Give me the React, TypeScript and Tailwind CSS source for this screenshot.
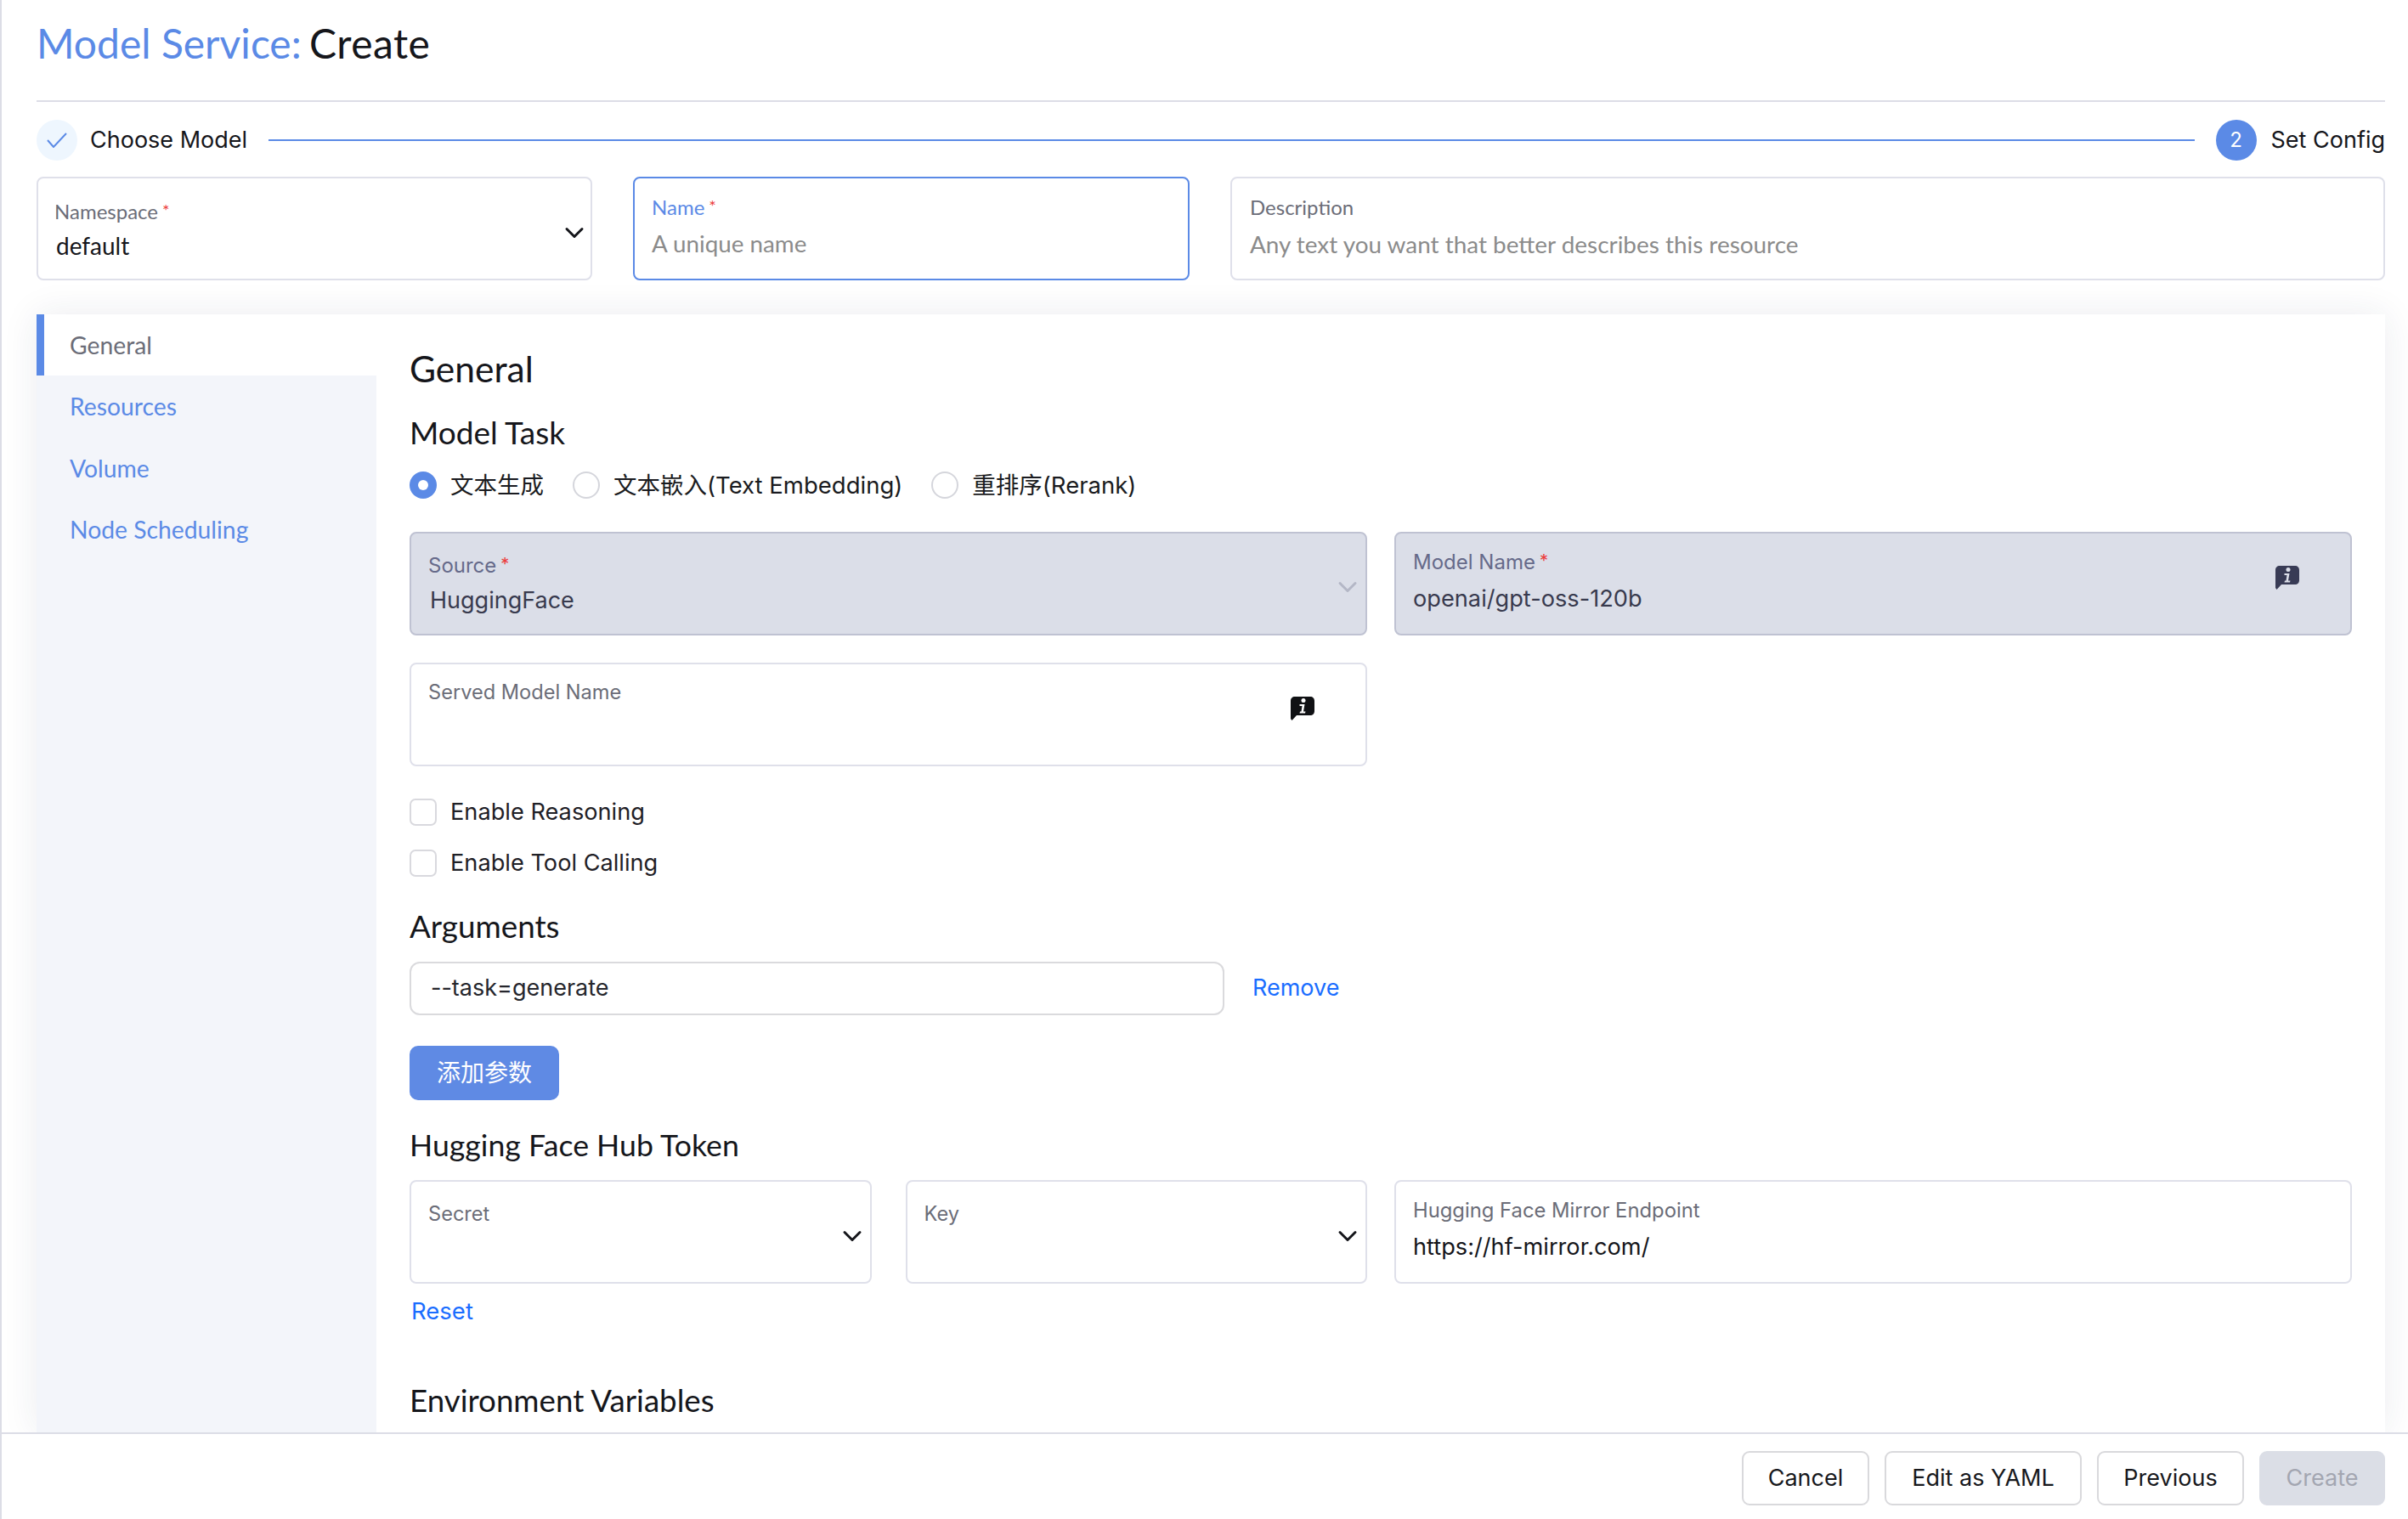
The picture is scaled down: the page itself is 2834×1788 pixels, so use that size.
import type { ReactNode } from 'react';
import { ChevronDown } from 'lucide-react';

const lato = "font-['Lato',sans-serif]";
const inter = "font-['Inter','Noto_Sans_CJK_SC',sans-serif]";

function InfoIcon({ color, bg }: { color: string; bg: string }) {
  return (
    <svg width="28" height="28" viewBox="0 0 28 28" className="flex-none">
      <path d="M5 0H23C26 0 28 2 28 5V17C28 20 26 22 23 22H7L1.500 28L0 26V5C0 2 2 0 5 0Z" fill={color} />
      <circle cx="15" cy="4.500" r="2.500" fill={bg} />
      <path d="M10.500 9H16.500L15 17.500H17.500L17 19.500H10.500L11 17.500H12.500L13.500 11H10.500Z" fill={bg} />
    </svg>
  );
}

function Chevron({ className }: { className: string }) {
  return <ChevronDown size={36} strokeWidth={2} className={className} />;
}

function Field(props: {
  label: string;
  required?: boolean;
  value?: string;
  placeholder?: string;
  boxCls: string;
  labelCls: string;
  valueCls?: string;
  right?: ReactNode;
}) {
  const { label, required, value, placeholder, boxCls, labelCls, valueCls, right } = props;
  return (
    <div className={`relative flex h-[122px] rounded-[8px] border-[2px] ${boxCls}`}>
      <div className="m-[1px] flex min-w-0 flex-1">
        <div className="flex min-w-0 flex-1 flex-col">
          <div className={`h-[30px] whitespace-nowrap leading-[30px] ${labelCls}`}>
            {label}
            {required && <span className="relative -top-[3px] ml-[5px] text-[20px] leading-none text-[#ec3b3b]">*</span>}
          </div>
          {value && <div className={`h-[36px] whitespace-nowrap leading-[36px] ${valueCls}`}>{value}</div>}
          {placeholder && <div className={`h-[36px] whitespace-nowrap leading-[36px] text-[#8b8b8b] ${valueCls}`}>{placeholder}</div>}
        </div>
        {right}
      </div>
    </div>
  );
}

function Heading({ children, className }: { children: ReactNode; className: string }) {
  return <h3 className={`h-[46px] leading-[46px] text-[#15161b] ${lato} ${className}`}>{children}</h3>;
}

function Radio({ checked, label }: { checked?: boolean; label: string }) {
  return (
    <div className="flex items-center gap-[16px]">
      {checked ? (
        <span className="flex h-[32px] w-[32px] items-center justify-center rounded-full bg-[#5b8ae6]">
          <span className="h-[12px] w-[12px] rounded-full bg-white" />
        </span>
      ) : (
        <span className="h-[32px] w-[32px] rounded-full border-[2px] border-[#d5d6dc] bg-white" />
      )}
      <span className={`text-[27.500px] leading-[36px] text-[#1a1b20] ${inter}`}>{label}</span>
    </div>
  );
}

function Checkbox({ label, className }: { label: string; className: string }) {
  return (
    <div className={`flex h-[32px] items-center gap-[16px] ${className}`}>
      <span className="h-[32px] w-[32px] rounded-[7px] border-[2px] border-[#d9d9de] bg-white" />
      <span className={`text-[27.200px] leading-[36px] text-[#1f2026] ${inter}`}>{label}</span>
    </div>
  );
}

function FooterButton({ label, className }: { label: string; className: string }) {
  return <button className={`h-[64px] rounded-[9px] border-[2px] text-[27px] ${inter} ${className}`}>{label}</button>;
}

export default function App() {
  const navItems = ['Resources', 'Volume', 'Node Scheduling'];

  return (
    <div className="flex h-[1788px] w-[2834px] flex-col overflow-hidden border-l-[2px] border-[#dcdde6] bg-white">
      <div className="flex min-h-0 flex-1 flex-col overflow-hidden pl-[41px] pr-[27px]">
        {/* Title */}
        <h1 className={`h-[118px] pt-[21px] text-[48px] leading-[60px] ${lato}`}>
          <span className="text-[#5b8ae6]">Model Service:</span>{' '}
          <span className="-ml-[3px] tracking-[0.4px] text-[#15161b]">Create</span>
        </h1>
        <div className="h-[2px] bg-[#dcdde6]" />

        {/* Stepper */}
        <div className="mt-[21px] flex h-[48px] items-center">
          <span className="flex h-[48px] w-[48px] items-center justify-center rounded-full bg-[#eef6fe]">
            <svg width="24" height="18" viewBox="0 0 24 18" fill="none">
              <path d="M1 9L8 17L23 1" stroke="#5b8ae6" strokeWidth="2" />
            </svg>
          </span>
          <span className={`ml-[15px] text-[27px] leading-[36px] text-[#15161b] ${inter}`}>Choose Model</span>
          <div className="mx-[25px] h-[2px] flex-1 bg-[#5b8ae6]" />
          <span className={`flex h-[48px] w-[48px] items-center justify-center rounded-full bg-[#5b8ae6] text-[24px] text-white ${inter}`}>2</span>
          <span className={`ml-[17px] text-[27px] leading-[36px] text-[#15161b] ${inter}`}>Set Config</span>
        </div>

        {/* Top fields */}
        <div className="mt-[19px] flex gap-[48px]">
          <div className="w-[654px] flex-none">
            <Field
              label="Namespace"
              required
              value="default"
              boxCls="border-[#dfe0ea] pl-[18px] pt-[23px]"
              labelCls={`text-[24px] text-[#6b6d78] ${lato}`}
              valueCls={`mt-[7px] ml-[2px] text-[28px] text-[#15161b] ${lato}`}
              right={<Chevron className="mt-[22px] flex-none text-[#15161b]" />}
            />
          </div>
          <div className="w-[655px] flex-none">
            <Field
              label="Name"
              required
              placeholder="A unique name"
              boxCls="border-[#5b8ae6] pl-[19px] pt-[18px]"
              labelCls={`text-[24px] text-[#5b8ae6] ${lato}`}
              valueCls={`mt-[10px] text-[27.800px] ${lato}`}
            />
          </div>
          <div className="flex-1">
            <Field
              label="Description"
              placeholder="Any text you want that better describes this resource"
              boxCls="border-[#dfe0ea] pl-[20px] pt-[18px]"
              labelCls={`text-[24px] text-[#6b6d78] ${lato}`}
              valueCls={`mt-[10px] text-[27.900px] ${lato}`}
            />
          </div>
        </div>

        {/* Main panel */}
        <div className="mt-[40px] flex min-h-0 flex-1 bg-white shadow-[0_0_40px_rgba(30,40,80,0.09)]">
          <nav className={`flex w-[400px] flex-none flex-col bg-[#f3f5fa] text-[28.300px] ${lato}`}>
            <div className="flex h-[72px] items-center border-l-[9px] border-[#5b8ae6] bg-white pl-[30px] text-[#6b6d78]">General</div>
            {navItems.map((item) => (
              <div key={item} className="flex h-[72.500px] items-center pl-[39px] text-[#5b8ae6]">
                {item}
              </div>
            ))}
          </nav>

          <div className="min-w-0 flex-1 px-[39px] pt-[37px]">
            <h2 className={`h-[54px] text-[42.500px] leading-[54px] text-[#15161b] ${lato}`}>General</h2>
            <Heading className="mt-[25px] text-[37px]">Model Task</Heading>

            <div className="mt-[23px] flex h-[32px] items-center gap-[34px]">
              <Radio checked label="文本生成" />
              <Radio label="文本嵌入(Text Embedding)" />
              <Radio label="重排序(Rerank)" />
            </div>

            <div className="mt-[39px] grid grid-cols-2 gap-[32px]">
              <Field
                label="Source"
                required
                value="HuggingFace"
                boxCls="border-[#bfc2d2] bg-[#dbdee8] pl-[19px] pt-[22px] pr-[2px]"
                labelCls={`text-[24px] text-[#666a8a] ${inter}`}
                valueCls={`mt-[8px] ml-[2px] text-[27px] text-[#383a4e] ${inter}`}
                right={<Chevron className="mt-[22px] flex-none text-[#b4b7c6]" />}
              />
              <Field
                label="Model Name"
                required
                value="openai/gpt-oss-120b"
                boxCls="border-[#bfc2d2] bg-[#dbdee8] pl-[19px] pt-[18px] pr-[59px]"
                labelCls={`text-[24px] text-[#666a8a] ${inter}`}
                valueCls={`mt-[10px] text-[27.200px] text-[#383a4e] ${inter}`}
                right={
                  <div className="mt-[19px]">
                    <InfoIcon color="#383b55" bg="#dbdee8" />
                  </div>
                }
              />
            </div>

            <div className="mt-[32px] grid grid-cols-2 gap-[32px]">
              <Field
                label="Served Model Name"
                boxCls="border-[#dfe0ea] pl-[19px] pt-[17px] pr-[59px]"
                labelCls={`text-[23.600px] text-[#6b6d78] ${inter}`}
                right={
                  <div className="mt-[20px]">
                    <InfoIcon color="#101114" bg="#ffffff" />
                  </div>
                }
              />
            </div>

            <Checkbox label="Enable Reasoning" className="mt-[38px]" />
            <Checkbox label="Enable Tool Calling" className="mt-[28px]" />

            <Heading className="mt-[35px] text-[36.800px]">Arguments</Heading>
            <div className="mt-[19px] flex items-center">
              <div className={`flex h-[63px] w-[959px] items-center rounded-[12px] border-[2px] border-[#dadadd] pl-[23px] text-[27px] text-[#25262c] ${inter}`}>
                --task=generate
              </div>
              <span className={`ml-[33px] text-[27px] text-[#1a6dff] ${inter}`}>Remove</span>
            </div>
            <button className={`mt-[36px] block h-[64px] w-[176px] rounded-[10px] bg-[#5f8ae4] text-[28px] text-white ${inter}`}>添加参数</button>

            <Heading className="mt-[30px] text-[35.700px]">Hugging Face Hub Token</Heading>
            <div className="mt-[18px] grid grid-cols-2 gap-[32px]">
              <div className="grid grid-cols-2 gap-[40px]">
                <Field
                  label="Secret"
                  boxCls="border-[#dfe0ea] pl-[19px] pt-[22px] pr-[2px]"
                  labelCls={`text-[23.600px] text-[#6b6d78] ${inter}`}
                  right={<Chevron className="mt-[23px] flex-none text-[#15161b]" />}
                />
                <Field
                  label="Key"
                  boxCls="border-[#dfe0ea] pl-[19px] pt-[22px] pr-[2px]"
                  labelCls={`text-[23.600px] text-[#6b6d78] ${inter}`}
                  right={<Chevron className="mt-[23px] flex-none text-[#15161b]" />}
                />
              </div>
              <Field
                label="Hugging Face Mirror Endpoint"
                value="https://hf-mirror.com/"
                boxCls="border-[#dfe0ea] pl-[19px] pt-[18px]"
                labelCls={`text-[23.800px] text-[#6b6d78] ${inter}`}
                valueCls={`mt-[10px] text-[27.200px] text-[#15161b] ${inter}`}
              />
            </div>
            <div className={`mt-[14px] h-[36px] pl-[2px] text-[27.500px] leading-[36px] text-[#1a6dff] ${inter}`}>Reset</div>
            <Heading className="mt-[64px] text-[36.700px]">Environment Variables</Heading>
          </div>
        </div>
      </div>

      {/* Footer */}
      <div className="flex h-[102px] flex-none justify-end gap-[18px] border-t-[2px] border-[#dcdde6] bg-white pr-[27px] pt-[20px]">
        <FooterButton label="Cancel" className="w-[150px] border-[#d9d9dc] bg-white text-[#17181c]" />
        <FooterButton label="Edit as YAML" className="w-[232px] border-[#d9d9dc] bg-white text-[#17181c]" />
        <FooterButton label="Previous" className="w-[173px] border-[#d9d9dc] bg-white text-[#17181c]" />
        <FooterButton label="Create" className="w-[148px] border-[#dbdee6] bg-[#dbdee6] text-[#a3a6b1]" />
      </div>
    </div>
  );
}
